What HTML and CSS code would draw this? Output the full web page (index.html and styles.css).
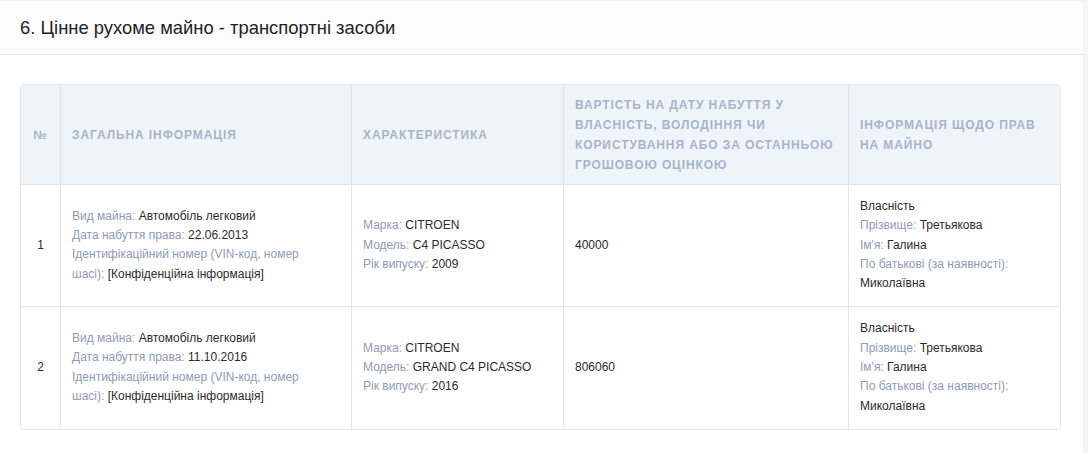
FILE: index.html
```html
<!DOCTYPE html>
<html lang="uk">
<head>
<meta charset="utf-8">
<link rel="stylesheet" href="styles.css">
</head>
<body>
<div class="card">
  <div class="card-head">6. Цінне рухоме майно - транспортні засоби</div>
  <div class="card-body">
    <table class="tbl">
      <colgroup>
        <col class="c-num"><col class="c-gen"><col class="c-char"><col class="c-val"><col class="c-rights">
      </colgroup>
      <thead>
        <tr>
          <th class="num">№</th>
          <th>Загальна інформація</th>
          <th>Характеристика</th>
          <th>Вартість на дату набуття у власність, володіння чи користування або за останньою грошовою оцінкою</th>
          <th>Інформація щодо прав на майно</th>
        </tr>
      </thead>
      <tbody>
        <tr>
          <td class="num">1</td>
          <td class="gen">
            <div><span class="lbl">Вид майна:</span> Автомобіль легковий</div>
            <div><span class="lbl">Дата набуття права:</span> 22.06.2013</div>
            <div><span class="lbl">Ідентифікаційний номер (VIN-код, номер шасі):</span> [Конфіденційна інформація]</div>
          </td>
          <td>
            <div><span class="lbl">Марка:</span> CITROEN</div>
            <div><span class="lbl">Модель:</span> C4 PICASSO</div>
            <div><span class="lbl">Рік випуску:</span> 2009</div>
          </td>
          <td>40000</td>
          <td>
            <div>Власність</div>
            <div><span class="lbl">Прізвище:</span> Третьякова</div>
            <div><span class="lbl">Ім'я:</span> Галина</div>
            <div><span class="lbl">По батькові (за наявності):</span> Миколаївна</div>
          </td>
        </tr>
        <tr>
          <td class="num">2</td>
          <td class="gen">
            <div><span class="lbl">Вид майна:</span> Автомобіль легковий</div>
            <div><span class="lbl">Дата набуття права:</span> 11.10.2016</div>
            <div><span class="lbl">Ідентифікаційний номер (VIN-код, номер шасі):</span> [Конфіденційна інформація]</div>
          </td>
          <td>
            <div><span class="lbl">Марка:</span> CITROEN</div>
            <div><span class="lbl">Модель:</span> GRAND C4 PICASSO</div>
            <div><span class="lbl">Рік випуску:</span> 2016</div>
          </td>
          <td>806060</td>
          <td>
            <div>Власність</div>
            <div><span class="lbl">Прізвище:</span> Третьякова</div>
            <div><span class="lbl">Ім'я:</span> Галина</div>
            <div><span class="lbl">По батькові (за наявності):</span> Миколаївна</div>
          </td>
        </tr>
      </tbody>
    </table>
  </div>
</div>
</body>
</html>
```

FILE: styles.css
```css
html, body {
  margin: 0;
  padding: 0;
}
body {
  background: #f3f5f8;
  font-family: "Liberation Sans", Arial, sans-serif;
  color: #2b2b2b;
  height: 453px;
  overflow: hidden;
}
.card {
  background: #ffffff;
  margin: 1px 5px 0 0;
  border-radius: 0 5px 0 0;
  min-height: 452px;
}
.card-head {
  height: 54px;
  box-sizing: border-box;
  padding: 16px 20px 0 20px;
  font-size: 18.4px;
  line-height: 22px;
  color: #222;
  background: #fcfcfd;
  border-bottom: 1px solid #e4e6ea;
  border-radius: 0 5px 0 0;
}
.card-body {
  padding: 29px 22px 0 20px;
}
.tbl {
  width: 1041px;
  border-collapse: separate;
  border-spacing: 0;
  border: 1px solid #e3e6eb;
  border-radius: 4px;
  table-layout: fixed;
  font-size: 12px;
  line-height: 19.3px;
}
.c-num { width: 39px; }
.c-gen { width: 291px; }
.c-char { width: 212px; }
.c-val { width: 285px; }
.c-rights { width: 212px; }
.tbl th {
  background: #eff4f8;
  color: #a7b4cb;
  font-weight: bold;
  text-transform: uppercase;
  letter-spacing: 0.9px;
  text-align: left;
  vertical-align: middle;
  line-height: 20px;
  padding: 9px 12px 9px 11px;
  height: 81px;
  border-left: 1px solid #e3e6eb;
}
.tbl th:first-child { border-left: none; border-radius: 4px 0 0 0; }
.tbl th:last-child { border-radius: 0 4px 0 0; }
.tbl td {
  vertical-align: middle;
  padding: 12px 12px 13px 11px;
  border-left: 1px solid #e3e6eb;
  border-top: 1px solid #e3e6eb;
  color: #2b2b2b;
}
.tbl td.gen { padding-right: 40px; }
.tbl td:first-child { border-left: none; }
.tbl .num { text-align: center; padding-left: 4px; padding-right: 4px; }
.lbl { color: #8e9bb4; }
```
